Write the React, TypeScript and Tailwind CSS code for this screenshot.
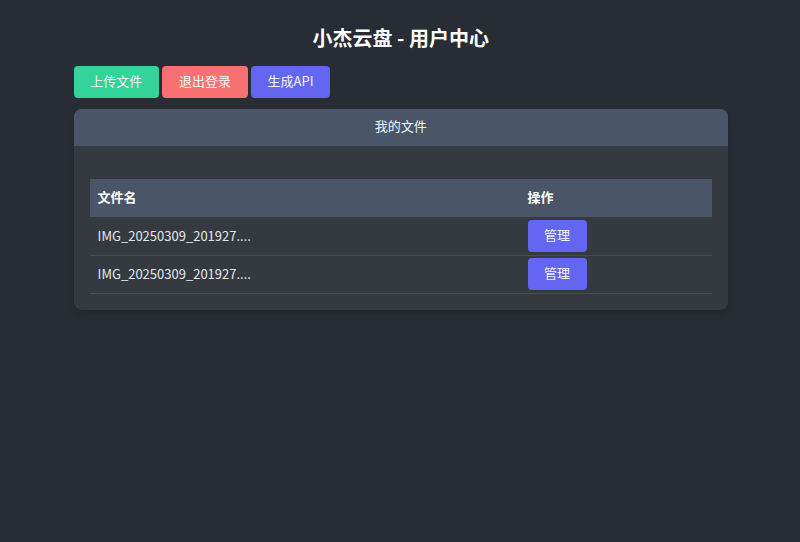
const font = "font-['Noto_Sans_CJK_SC','Noto_Sans',sans-serif]";

const files = ["IMG_20250309_201927....", "IMG_20250309_201927...."];

function ActionButton({ label, color }: { label: string; color: string }) {
  return (
    <button
      type="button"
      className={`h-8 rounded-[4px] px-[16.6px] pb-[2px] text-[13px] text-[#f3f4f6] ${color}`}
    >
      {label}
    </button>
  );
}

export default function App() {
  return (
    <div className={`min-h-[542px] bg-[#282c34] pt-[24px] pr-[72px] pl-[73.6px] text-[#e5e7eb] ${font}`}>
      <h1 className="h-[30px] text-center text-[20px] leading-[28px] font-bold text-white">
        小杰云盘 - 用户中心
      </h1>

      <div className="mt-[12px] flex gap-[3.5px]">
        <ActionButton label="上传文件" color="bg-[#34d399]" />
        <ActionButton label="退出登录" color="bg-[#f87171]" />
        <ActionButton label="生成API" color="bg-[#6366f1]" />
      </div>

      <div className="mt-[11px] overflow-hidden rounded-lg bg-[#343a40] shadow-md">
        <div className="h-[37px] bg-[#4a5568] text-center text-[13px] leading-[33px] text-[#f3f4f6]">
          我的文件
        </div>
        <div className="px-4 pt-[33px] pb-4">
          <table className="w-full table-fixed border-collapse text-left text-[13px]">
            <thead>
              <tr className="h-[38px] bg-[#4a5568]">
                <th className="w-[430px] px-2 pb-[2px] font-bold text-white">文件名</th>
                <th className="px-2 pb-[2px] font-bold text-white">操作</th>
              </tr>
            </thead>
            <tbody>
              {files.map((name, i) => (
                <tr key={i} className="h-[38px] border-b border-[#444b55]">
                  <td className="px-2">{name}</td>
                  <td className="px-2">
                    <button
                      type="button"
                      className="block h-8 w-[59px] rounded-[4px] bg-[#6366f1] pb-[2px] text-[13px] text-[#f3f4f6]"
                    >
                      管理
                    </button>
                  </td>
                </tr>
              ))}
            </tbody>
          </table>
        </div>
      </div>
    </div>
  );
}
